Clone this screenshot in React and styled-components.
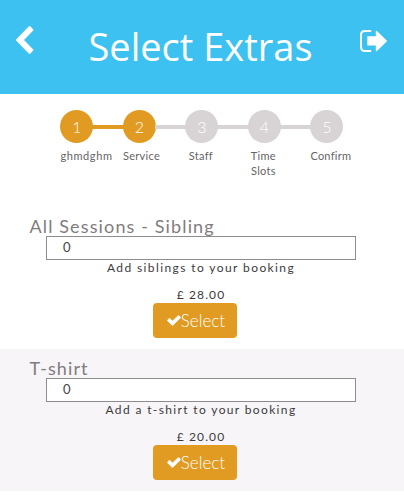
import React from "react";
import styled, { createGlobalStyle } from "styled-components";

const GlobalStyle = createGlobalStyle`
  * { box-sizing: border-box; }
  body { margin: 0; background: #fff; font-family: Lato, "Liberation Sans", sans-serif; overflow: hidden; }
`;

const Page = styled.main`
  width: 404px;
  height: 500px;
  background: #fff;
`;

const Header = styled.header`
  display: flex;
  align-items: flex-start;
  justify-content: space-between;
  height: 94px;
  padding: 26px 17px 0 16px;
  background: #3dc1f0;
  color: #fff;
`;

const IconButton = styled.button`
  display: block;
  flex: none;
  margin-top: ${(p) => p.$drop || 0}px;
  padding: 0;
  border: 0;
  background: none;
  color: inherit;
  line-height: 0;
`;

const Title = styled.h1`
  margin: -1px 0 0 7px;
  font: 400 38px/42px "Open Sans", sans-serif;
  white-space: nowrap;
`;

const Steps = styled.ol`
  display: flex;
  margin: 0;
  padding: 16px 60px 0 60.4px;
  height: 107px;
  list-style: none;
`;

const Step = styled.li`
  display: flex;
  flex: none;
  width: 62.5px;
  align-items: flex-start;
`;

const StepBody = styled.div`
  display: flex;
  flex: none;
  flex-direction: column;
  align-items: ${(p) => (p.$centered ? "center" : "flex-start")};
  width: 33px;
`;

const Circle = styled.div`
  width: 33px;
  height: 33px;
  border-radius: 50%;
  background: ${(p) => (p.$active ? "#e29b22" : "#d8d3d5")};
  color: #fff;
  font-size: 16px;
  font-weight: 300;
  line-height: 34px;
  text-align: center;
`;

const Connector = styled.div`
  flex: 1;
  height: 4px;
  margin: 15px -1px 0;
  background: ${(p) => (p.$active ? "#e29b22" : "#d8d3d5")};
`;

const StepLabel = styled.div`
  margin: 5px ${(p) => (p.$centered ? 2 : 0)}px 0 0;
  color: #666366;
  font-size: 11px;
  line-height: 15px;
  letter-spacing: ${(p) => p.$spacing}px;
  text-align: center;
  white-space: pre;
`;

const Extra = styled.section`
  display: flex;
  flex-direction: column;
  align-items: center;
  height: ${(p) => p.$height}px;
  padding-top: ${(p) => p.$top}px;
  background: ${(p) => (p.$shaded ? "#f7f5f8" : "#fff")};
`;

const ExtraTitle = styled.h2`
  align-self: flex-start;
  height: 20px;
  margin: 0 0 0 29.5px;
  color: #7f7c7f;
  font-size: 18px;
  font-weight: 400;
  line-height: 20px;
  letter-spacing: ${(p) => p.$spacing}px;
  white-space: nowrap;
`;

const Quantity = styled.input`
  flex: none;
  width: 310px;
  height: 24px;
  margin-right: 2px;
  padding: 0 16px 2px;
  border: 1px solid #8e8c8e;
  border-radius: 0;
  outline: 0;
  background: #fff;
  color: #444;
  font: 13px Lato, sans-serif;
`;

const Note = styled.p`
  margin: 0 2px 0 0;
  height: 27px;
  color: #3d3a3d;
  font-size: 12px;
  line-height: 16px;
  letter-spacing: ${(p) => p.$spacing}px;
  white-space: nowrap;
`;

const Price = styled.p`
  margin: 0 2px 0 0;
  height: 16px;
  color: #3d3a3d;
  font-size: 12px;
  line-height: 16px;
  letter-spacing: 1.1px;
`;

const SelectButton = styled.button`
  display: flex;
  flex: none;
  align-items: center;
  justify-content: center;
  width: 84px;
  height: 35px;
  margin-right: 14px;
  padding: 0 0 0 2px;
  border: 0;
  border-radius: 4px;
  background: #e29b22;
  color: #fff;
  font: 300 17px/35px Lato, sans-serif;
`;

const steps = [
  { label: "ghmdghm", spacing: 0.6, active: true, line: true },
  { label: "Service", spacing: 0.3, active: true },
  { label: "Staff", spacing: 0.3, centered: true },
  { label: "Time\nSlots", spacing: 0.3, centered: true },
  { label: "Confirm", spacing: 0.25 },
];

const extras = [
  { title: "All Sessions - Sibling", titleSpacing: 1.13, note: "Add siblings to your booking", noteSpacing: 1.4, price: "£ 28.00", height: 148, top: 15 },
  { title: "T-shirt", titleSpacing: 1.1, note: "Add a t-shirt to your booking", noteSpacing: 1.36, price: "£ 20.00", height: 142, top: 9, shaded: true },
];

function BackIcon() {
  return (
    <svg width="18" height="29" viewBox="0 0 18 29" fill="currentColor">
      <path d="M12.7.4Q13.6-.4 14.5.5L17.1 3.2Q17.8 4 17 4.8L8 14l9 9.2q.8.8 0 1.6l-2.6 2.7q-.9.9-1.7 0L.3 14.8Q-.4 14 .3 13.2Z" />
    </svg>
  );
}

function ExitIcon() {
  return (
    <svg width="27" height="22" viewBox="0 0 27 22" fill="none">
      <path d="M11.2 1H5Q1 1 1 5v12q0 4 4 4h6.2" stroke="#fff" strokeWidth="2" />
      <path d="M7.3 6.3h8.5V1.5q0-1.3 1.1-.4L26.5 10.2q.7.8 0 1.6l-9.6 9.1q-1.1.9-1.1-.4V15.5H7.3Z" fill="#fff" />
    </svg>
  );
}

function CheckIcon() {
  return (
    <svg width="14" height="11" viewBox="0 0 14 11" fill="currentColor">
      <path d="M.4 4.9 2 3.3q.5-.4 1 0L5.5 5.8 11 .4q.5-.5 1 0l1.6 1.5q.4.5 0 1L6 10.5q-.5.5-1 0L.4 5.9q-.5-.5 0-1Z" />
    </svg>
  );
}

export default function App() {
  return (
    <Page>
      <GlobalStyle />
      <Header>
        <IconButton aria-label="Back"><BackIcon /></IconButton>
        <Title>Select Extras</Title>
        <IconButton aria-label="Log out" $drop={4}><ExitIcon /></IconButton>
      </Header>
      <Steps>
        {steps.map((s, i) => (
          <Step key={s.label}>
            <StepBody $centered={s.centered}>
              <Circle $active={s.active}>{i + 1}</Circle>
              <StepLabel $spacing={s.spacing} $centered={s.centered}>{s.label}</StepLabel>
            </StepBody>
            {i < steps.length - 1 && <Connector $active={s.line} />}
          </Step>
        ))}
      </Steps>
      {extras.map((e) => (
        <Extra key={e.title} $shaded={e.shaded} $height={e.height} $top={e.top}>
          <ExtraTitle $spacing={e.titleSpacing}>{e.title}</ExtraTitle>
          <Quantity defaultValue="0" aria-label={e.title} />
          <Note $spacing={e.noteSpacing}>{e.note}</Note>
          <Price>{e.price}</Price>
          <SelectButton><CheckIcon />Select</SelectButton>
        </Extra>
      ))}
    </Page>
  );
}
